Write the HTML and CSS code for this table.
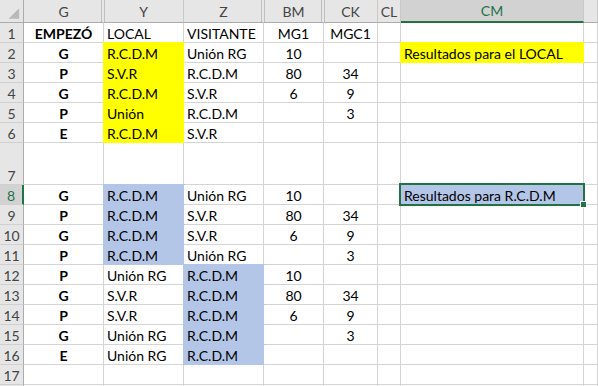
FILE: index.html
```html
<!DOCTYPE html>
<html lang="es">
<head>
<meta charset="utf-8">
<title>Hoja</title>
<link rel="stylesheet" href="styles.css">
</head>
<body>
<div class="sheet">
  <div class="c ch corner"><svg width="24" height="22" viewBox="0 0 24 22"><polygon points="20,8 20,19 9,19" fill="#b9b9b9"/></svg></div>
  <div class="c ch hr">G</div>
  <div class="c ch hl">Y</div>
  <div class="c ch hr">Z</div>
  <div class="c ch hl hr">BM</div>
  <div class="c ch hl">CK</div>
  <div class="c ch">CL</div>
  <div class="c ch csel">CM</div>
  <div class="c ch"></div>

  <div class="c rh">1</div>
  <div class="c ctr b">EMPEZÓ</div>
  <div class="c">LOCAL</div>
  <div class="c">VISITANTE</div>
  <div class="c ctr">MG1</div>
  <div class="c ctr">MGC1</div>
  <div class="c"></div>
  <div class="c"></div>
  <div class="c"></div>

  <div class="c rh">2</div>
  <div class="c ctr b">G</div>
  <div class="c y">R.C.D.M</div>
  <div class="c">Unión RG</div>
  <div class="c ctr">10</div>
  <div class="c ctr"></div>
  <div class="c"></div>
  <div class="c y">Resultados para el LOCAL</div>
  <div class="c"></div>

  <div class="c rh">3</div>
  <div class="c ctr b">P</div>
  <div class="c y">S.V.R</div>
  <div class="c">R.C.D.M</div>
  <div class="c ctr">80</div>
  <div class="c ctr">34</div>
  <div class="c"></div>
  <div class="c"></div>
  <div class="c"></div>

  <div class="c rh">4</div>
  <div class="c ctr b">G</div>
  <div class="c y">R.C.D.M</div>
  <div class="c">S.V.R</div>
  <div class="c ctr">6</div>
  <div class="c ctr">9</div>
  <div class="c"></div>
  <div class="c"></div>
  <div class="c"></div>

  <div class="c rh">5</div>
  <div class="c ctr b">P</div>
  <div class="c y">Unión</div>
  <div class="c">R.C.D.M</div>
  <div class="c ctr"></div>
  <div class="c ctr">3</div>
  <div class="c"></div>
  <div class="c"></div>
  <div class="c"></div>

  <div class="c rh">6</div>
  <div class="c ctr b">E</div>
  <div class="c y">R.C.D.M</div>
  <div class="c">S.V.R</div>
  <div class="c ctr"></div>
  <div class="c ctr"></div>
  <div class="c"></div>
  <div class="c"></div>
  <div class="c"></div>

  <div class="c rh">7</div>
  <div class="c"></div>
  <div class="c"></div>
  <div class="c"></div>
  <div class="c"></div>
  <div class="c"></div>
  <div class="c"></div>
  <div class="c"></div>
  <div class="c"></div>

  <div class="c rh rsel">8</div>
  <div class="c ctr b">G</div>
  <div class="c bl">R.C.D.M</div>
  <div class="c">Unión RG</div>
  <div class="c ctr">10</div>
  <div class="c ctr"></div>
  <div class="c"></div>
  <div class="c bl active">Resultados para R.C.D.M<span class="cursor"><span class="handle"></span></span></div>
  <div class="c"></div>

  <div class="c rh">9</div>
  <div class="c ctr b">P</div>
  <div class="c bl">R.C.D.M</div>
  <div class="c">S.V.R</div>
  <div class="c ctr">80</div>
  <div class="c ctr">34</div>
  <div class="c"></div>
  <div class="c"></div>
  <div class="c"></div>

  <div class="c rh">10</div>
  <div class="c ctr b">G</div>
  <div class="c bl">R.C.D.M</div>
  <div class="c">S.V.R</div>
  <div class="c ctr">6</div>
  <div class="c ctr">9</div>
  <div class="c"></div>
  <div class="c"></div>
  <div class="c"></div>

  <div class="c rh">11</div>
  <div class="c ctr b">P</div>
  <div class="c bl">R.C.D.M</div>
  <div class="c">Unión RG</div>
  <div class="c ctr"></div>
  <div class="c ctr">3</div>
  <div class="c"></div>
  <div class="c"></div>
  <div class="c"></div>

  <div class="c rh">12</div>
  <div class="c ctr b">P</div>
  <div class="c">Unión RG</div>
  <div class="c bl">R.C.D.M</div>
  <div class="c ctr">10</div>
  <div class="c ctr"></div>
  <div class="c"></div>
  <div class="c"></div>
  <div class="c"></div>

  <div class="c rh">13</div>
  <div class="c ctr b">G</div>
  <div class="c">S.V.R</div>
  <div class="c bl">R.C.D.M</div>
  <div class="c ctr">80</div>
  <div class="c ctr">34</div>
  <div class="c"></div>
  <div class="c"></div>
  <div class="c"></div>

  <div class="c rh">14</div>
  <div class="c ctr b">P</div>
  <div class="c">S.V.R</div>
  <div class="c bl">R.C.D.M</div>
  <div class="c ctr">6</div>
  <div class="c ctr">9</div>
  <div class="c"></div>
  <div class="c"></div>
  <div class="c"></div>

  <div class="c rh">15</div>
  <div class="c ctr b">G</div>
  <div class="c">Unión RG</div>
  <div class="c bl">R.C.D.M</div>
  <div class="c ctr"></div>
  <div class="c ctr">3</div>
  <div class="c"></div>
  <div class="c"></div>
  <div class="c"></div>

  <div class="c rh">16</div>
  <div class="c ctr b">E</div>
  <div class="c">Unión RG</div>
  <div class="c bl">R.C.D.M</div>
  <div class="c ctr"></div>
  <div class="c ctr"></div>
  <div class="c"></div>
  <div class="c"></div>
  <div class="c"></div>

  <div class="c rh">17</div>
  <div class="c"></div>
  <div class="c"></div>
  <div class="c"></div>
  <div class="c"></div>
  <div class="c"></div>
  <div class="c"></div>
  <div class="c"></div>
  <div class="c"></div>

  <div class="c rh"></div>
  <div class="c"></div>
  <div class="c"></div>
  <div class="c"></div>
  <div class="c"></div>
  <div class="c"></div>
  <div class="c"></div>
  <div class="c"></div>
  <div class="c"></div>
</div>
</body>
</html>
```

FILE: styles.css
```css
html, body {
  margin: 0;
  padding: 0;
  background: #fff;
  overflow: hidden;
}

body {
  font-family: Lato, "Open Sans", sans-serif;
  font-size: 14px;
  color: #000;
}

.sheet {
  display: grid;
  grid-template-columns: 24px 80px 80px 80px 60px 54px 23px 183px 1fr;
  grid-template-rows: 23px repeat(6, 20px) 42px repeat(11, 20px);
}

.c {
  box-sizing: border-box;
  display: flex;
  align-items: flex-end;
  padding: 0 3px;
  line-height: 17px;
  white-space: nowrap;
  background: #fff;
  border-right: 1px solid #d4d4d4;
  border-bottom: 1px solid #d4d4d4;
}

.ctr { justify-content: center; }
.b { font-weight: 700; }

.y {
  background: #ffff00;
  border-color: #ffff00;
  box-shadow: 0 0 0 1px #ffff00;
}

.bl {
  background: #b4c6e7;
  border-color: #b4c6e7;
  box-shadow: 0 0 0 1px #b4c6e7;
}

/* column headers */
.ch {
  padding: 0;
  align-items: center;
  justify-content: center;
  background: #e6e6e6;
  color: #444;
  border-right: 1px solid #c8c8c8;
  border-bottom: 1px solid #ababab;
}

.ch.hr {
  border-right-color: #e6e6e6;
  box-shadow: inset -1px 0 0 #e6e6e6, inset -2px 0 0 #c0c0c0;
}

.ch.hl {
  box-shadow: inset 1px 0 0 #c0c0c0;
}

.ch.hl.hr {
  box-shadow: inset -1px 0 0 #e6e6e6, inset -2px 0 0 #c0c0c0, inset 1px 0 0 #c0c0c0;
}

.corner {
  align-items: stretch;
  border-right-color: #ababab;
}

.corner svg { display: block; }

.csel {
  background: #d2d2d2;
  color: #217346;
  border-bottom: 2px solid #217346;
}

/* row headers */
.rh {
  padding: 0;
  justify-content: center;
  background: #e6e6e6;
  color: #444;
  border-right: 1px solid #ababab;
  border-bottom: 1px solid #d0d0d0;
}

.rsel {
  background: #d2d2d2;
  color: #217346;
  border-right: 2px solid #217346;
}

/* active cell */
.active {
  position: relative;
}

.cursor {
  position: absolute;
  left: -2px;
  top: -2px;
  right: -2px;
  bottom: -2px;
  border: 2px solid #217346;
  z-index: 2;
}

.handle {
  position: absolute;
  right: -4px;
  bottom: -4px;
  width: 5px;
  height: 5px;
  background: #217346;
  border: 1px solid #fff;
}
```
